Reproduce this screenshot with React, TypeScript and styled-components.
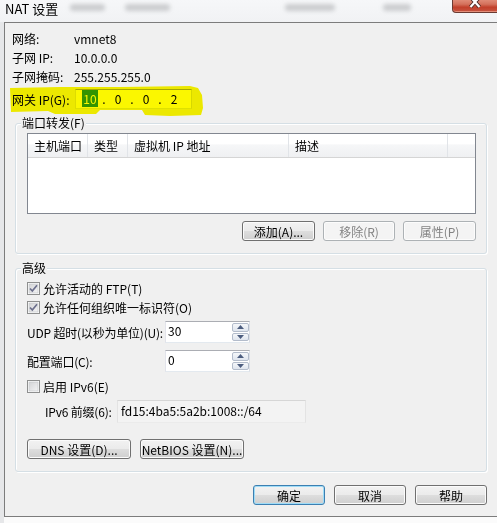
import React from 'react';
import styled, { createGlobalStyle } from 'styled-components';

const GlobalStyle = createGlobalStyle`
  * { box-sizing: border-box; }
  html, body { margin: 0; padding: 0; background: #fff; }
  body {
    font-family: "Noto Sans CJK SC", "Liberation Sans", sans-serif;
    font-size: 12px;
    color: #000;
  }
`;

const Page = styled.div`
  position: relative;
  width: 497px;
  height: 523px;
  overflow: hidden;
  display: flex;
  flex-direction: column;
  background: linear-gradient(to right, #e6e7e9 0, #e6e7e9 4px, #fbfbfb 4px);
`;

// window chrome
const TitleBar = styled.div`
  height: 22px;
  flex: none;
  display: flex;
  align-items: flex-start;
  padding-left: 5px;
  background: linear-gradient(#f6f7f9, #f1f2f4);
`;

const Title = styled.span`
  font-size: 13px;
  line-height: 15px;
  margin-top: 1px;
`;

const Ghost = styled.span<{ $ml: number; $w: number }>`
  margin-left: ${p => p.$ml}px;
  width: ${p => p.$w}px;
  height: 7px;
  margin-top: 4px;
  background: #a9abae;
  border-radius: 3px;
  filter: blur(2px);
  opacity: 0.55;
`;

const CloseButton = styled.div`
  margin-left: auto;
  width: 46px;
  height: 13px;
  margin-right: -1px;
  border: 1px solid #6b3a32;
  border-top: none;
  border-radius: 0 0 0 4px;
  background: linear-gradient(#e08a76 0%, #d4715c 35%, #c2402b 60%, #c75541 100%);
  box-shadow: inset 0 -1px 0 rgba(255, 200, 180, 0.5);
  display: flex;
  justify-content: center;
`;

const Client = styled.div`
  margin-left: 4px;
  height: 495px;
  flex: none;
  border-top: 1px solid #7c7c7c;
  border-left: 1px solid #7c7c7c;
  border-bottom: 1px solid #7c7c7c;
  background: #f0f0f0;
  padding-top: 6px;
  display: flex;
  flex-direction: column;
`;

// top info
const InfoRow = styled.div<{ $mt?: number; $h?: number }>`
  display: flex;
  align-items: center;
  height: ${p => p.$h ?? 19}px;
  margin-top: ${p => p.$mt ?? 0}px;
  padding-left: 7px;
`;

const InfoLabel = styled.span`
  width: 62px;
  flex: none;
`;

const IpField = styled.div`
  width: 117px;
  height: 20px;
  margin-left: 1px;
  padding-left: 3px;
  display: flex;
  align-items: center;
  background: #fff;
  border: 1px solid;
  border-color: #abadb3 #dbdfe6 #e3e9ef #e2e3ea;
`;

const IpPart = styled.span`
  width: 22px;
  text-align: center;
  line-height: 16px;
`;

const IpDot = styled.span`
  width: 6px;
  text-align: center;
  line-height: 16px;
`;

const Selected = styled.span`
  background: #3399ff;
  color: #fff;
  padding: 0 1px;
`;

// group boxes
const Group = styled.fieldset<{ $mt: number }>`
  margin: ${p => p.$mt}px 10px 0;
  padding: 0;
  min-width: 0;
  border: 1px solid #d5dfe5;
  border-radius: 3px;
  box-shadow: inset 1px 1px 0 #fff, 1px 1px 0 #fff;
`;

const Legend = styled.legend`
  margin-left: 5px;
  padding: 0 1px;
  line-height: 16px;
  background: #f0f0f0;
`;

const GroupBody = styled.div<{ $pad: string }>`
  padding: ${p => p.$pad};
  display: flex;
  flex-direction: column;
`;

const ListView = styled.div`
  height: 81px;
  border: 1px solid #828790;
  background: #fff;
`;

const ListHeader = styled.div`
  display: flex;
  height: 24px;
  border-bottom: 1px solid #d5d5d5;
  background: linear-gradient(#ffffff 0%, #ffffff 45%, #f6f7f8 46%, #eff0f2 100%);
`;

const HeaderCell = styled.div<{ $w?: number }>`
  width: ${p => (p.$w ? `${p.$w}px` : 'auto')};
  flex: ${p => (p.$w ? 'none' : '1')};
  padding: 2px 0 0 6px;
  line-height: 20px;
  border-right: ${p => (p.$w ? '1px solid #e1e4e8' : 'none')};
  white-space: nowrap;
`;

const ButtonRow = styled.div<{ $mt: number; $gap: number; $end?: boolean; $pr?: number }>`
  display: flex;
  justify-content: ${p => (p.$end ? 'flex-end' : 'flex-start')};
  gap: ${p => p.$gap}px;
  margin-top: ${p => p.$mt}px;
  padding-right: ${p => p.$pr ?? 0}px;
`;

const Button = styled.button<{ $w: number; $primary?: boolean }>`
  width: ${p => p.$w}px;
  height: 20px;
  padding: 0;
  font: inherit;
  line-height: 17px;
  color: #000;
  border: 1px solid ${p => (p.$primary ? '#3c7fb1' : '#707070')};
  border-radius: 3px;
  background: linear-gradient(#f2f2f2 0%, #ebebeb 48%, #dddddd 52%, #cfcfcf 100%);
  box-shadow: inset 0 0 0 1px ${p => (p.$primary ? '#9fdcf7' : '#fbfbfb')};
  white-space: nowrap;
  &:disabled {
    color: #838383;
    border-color: #adb2b5;
    background: #f4f4f4;
    box-shadow: inset 0 0 0 1px #fcfcfc;
  }
`;

const CheckRow = styled.label<{ $mt?: number }>`
  display: flex;
  align-items: center;
  gap: 3px;
  height: 19px;
  margin-top: ${p => p.$mt ?? 0}px;
`;

const FieldRow = styled.div<{ $mt: number; $indent?: number }>`
  display: flex;
  align-items: center;
  height: 22px;
  margin-top: ${p => p.$mt}px;
  padding-left: ${p => p.$indent ?? 0}px;
`;

const FieldLabel = styled.span<{ $w: number }>`
  width: ${p => p.$w}px;
  flex: none;
  white-space: nowrap;
  letter-spacing: -0.2px;
`;

const SpinBox = styled.div`
  width: 85px;
  height: 22px;
  display: flex;
  background: #fff;
  border: 1px solid;
  border-color: #abadb3 #dbdfe6 #e3e9ef #e2e3ea;
`;

const SpinValue = styled.span`
  flex: 1;
  padding-left: 2px;
  line-height: 18px;
`;

const SpinButtons = styled.div`
  width: 17px;
  display: flex;
  flex-direction: column;
  gap: 1px;
  padding: 1px 0;
`;

const SpinArrow = styled.div`
  flex: 1;
  display: flex;
  align-items: center;
  justify-content: center;
  border: 1px solid #b3bccb;
  border-radius: 2px;
  background: linear-gradient(#f5f7fa, #dfe5ee);
`;

const ReadOnlyBox = styled.div`
  width: 189px;
  height: 23px;
  padding-left: 3px;
  line-height: 19px;
  background: #f3f3f3;
  border: 1px solid;
  border-color: #d6d6d6 #e3e3e3 #ebebeb #e3e3e3;
  white-space: nowrap;
`;

const Highlight = styled.svg`
  position: absolute;
  left: 8px;
  top: 84px;
  width: 198px;
  height: 34px;
  mix-blend-mode: multiply;
  pointer-events: none;
`;

const Check = ({ checked }: { checked?: boolean }) => (
  <svg width="13" height="13" viewBox="0 0 13 13">
    <defs>
      <linearGradient id={checked ? 'cbg1' : 'cbg0'} x1="0" y1="0" x2="1" y2="1">
        <stop offset="0" stopColor="#d3d4d6" />
        <stop offset="1" stopColor="#f4f4f5" />
      </linearGradient>
    </defs>
    <rect x="0.5" y="0.5" width="12" height="12" fill="#fff" stroke="#8e8f8f" />
    <rect x="2" y="2" width="9" height="9" fill={`url(#${checked ? 'cbg1' : 'cbg0'})`} stroke="#c0c2c5" strokeWidth="0.6" />
    {checked && (
      <path d="M3 6.5 L5.3 9 L10 3.2" fill="none" stroke="#6c6f8c" strokeWidth="1.7" />
    )}
  </svg>
);

const Arrow = ({ up }: { up?: boolean }) => (
  <svg width="7" height="4" viewBox="0 0 7 4">
    <path d={up ? 'M0 4 L3.5 0 L7 4 Z' : 'M0 0 L3.5 4 L7 0 Z'} fill="#4c5d7f" />
  </svg>
);

const Spin = ({ value }: { value: string }) => (
  <SpinBox>
    <SpinValue>{value}</SpinValue>
    <SpinButtons>
      <SpinArrow><Arrow up /></SpinArrow>
      <SpinArrow><Arrow /></SpinArrow>
    </SpinButtons>
  </SpinBox>
);

export default function App() {
  return (
    <Page>
      <GlobalStyle />
      <TitleBar>
        <Title>NAT 设置</Title>
        <Ghost $ml={12} $w={35} />
        <Ghost $ml={20} $w={45} />
        <Ghost $ml={115} $w={50} />
        <Ghost $ml={48} $w={28} />
        <CloseButton>
          <svg width="14" height="10" viewBox="0 0 14 10">
            <path d="M2.5 -3 L11.5 7 M11.5 -3 L2.5 7" stroke="#4a2a26" strokeWidth="4" />
            <path d="M2.5 -3 L11.5 7 M11.5 -3 L2.5 7" stroke="#fff" strokeWidth="2.2" />
          </svg>
        </CloseButton>
      </TitleBar>

      <Client>
        <InfoRow><InfoLabel>网络:</InfoLabel>vmnet8</InfoRow>
        <InfoRow><InfoLabel>子网 IP:</InfoLabel>10.0.0.0</InfoRow>
        <InfoRow><InfoLabel>子网掩码:</InfoLabel>255.255.255.0</InfoRow>
        <InfoRow $mt={3} $h={20}>
          <InfoLabel>网关 IP(G):</InfoLabel>
          <IpField>
            <IpPart><Selected>10</Selected></IpPart>
            <IpDot>.</IpDot>
            <IpPart>0</IpPart>
            <IpDot>.</IpDot>
            <IpPart>0</IpPart>
            <IpDot>.</IpDot>
            <IpPart>2</IpPart>
          </IpField>
        </InfoRow>

        <Group $mt={6}>
          <Legend>端口转发(F)</Legend>
          <GroupBody $pad="2px 10px 12px 11px">
            <ListView>
              <ListHeader>
                <HeaderCell $w={60}>主机端口</HeaderCell>
                <HeaderCell $w={40}>类型</HeaderCell>
                <HeaderCell $w={161}>虚拟机 IP 地址</HeaderCell>
                <HeaderCell $w={159}>描述</HeaderCell>
                <HeaderCell />
              </ListHeader>
            </ListView>
            <ButtonRow $mt={7} $gap={8} $end>
              <Button $w={73}>添加(A)...</Button>
              <Button $w={72} disabled>移除(R)</Button>
              <Button $w={73} disabled>属性(P)</Button>
            </ButtonRow>
          </GroupBody>
        </Group>

        <Group $mt={6}>
          <Legend>高级</Legend>
          <GroupBody $pad="3px 10px 12px 11px">
            <CheckRow><Check checked />允许活动的 FTP(T)</CheckRow>
            <CheckRow><Check checked />允许任何组织唯一标识符(O)</CheckRow>
            <FieldRow $mt={4}>
              <FieldLabel $w={138}>UDP 超时(以秒为单位)(U):</FieldLabel>
              <Spin value="30" />
            </FieldRow>
            <FieldRow $mt={7}>
              <FieldLabel $w={138}>配置端口(C):</FieldLabel>
              <Spin value="0" />
            </FieldRow>
            <CheckRow $mt={5}><Check />启用 IPv6(E)</CheckRow>
            <FieldRow $mt={4} $indent={18}>
              <FieldLabel $w={72}>IPv6 前缀(6):</FieldLabel>
              <ReadOnlyBox>fd15:4ba5:5a2b:1008::/64</ReadOnlyBox>
            </FieldRow>
            <ButtonRow $mt={17} $gap={9}>
              <Button $w={104}>DNS 设置(D)...</Button>
              <Button $w={104}>NetBIOS 设置(N)...</Button>
            </ButtonRow>
          </GroupBody>
        </Group>

        <ButtonRow $mt={13} $gap={9} $end $pr={10}>
          <Button $w={72} $primary>确定</Button>
          <Button $w={72}>取消</Button>
          <Button $w={72}>帮助</Button>
        </ButtonRow>
      </Client>

      <Highlight viewBox="0 0 198 34">
        <polygon
          points="2,4 52,3 112,3 182,2 190,4 194,11 195,24 193,31 162,32 137,31 134,26 92,26 88,30 47,30 40,27 3,28"
          fill="#fbf700"
        />
      </Highlight>
    </Page>
  );
}
